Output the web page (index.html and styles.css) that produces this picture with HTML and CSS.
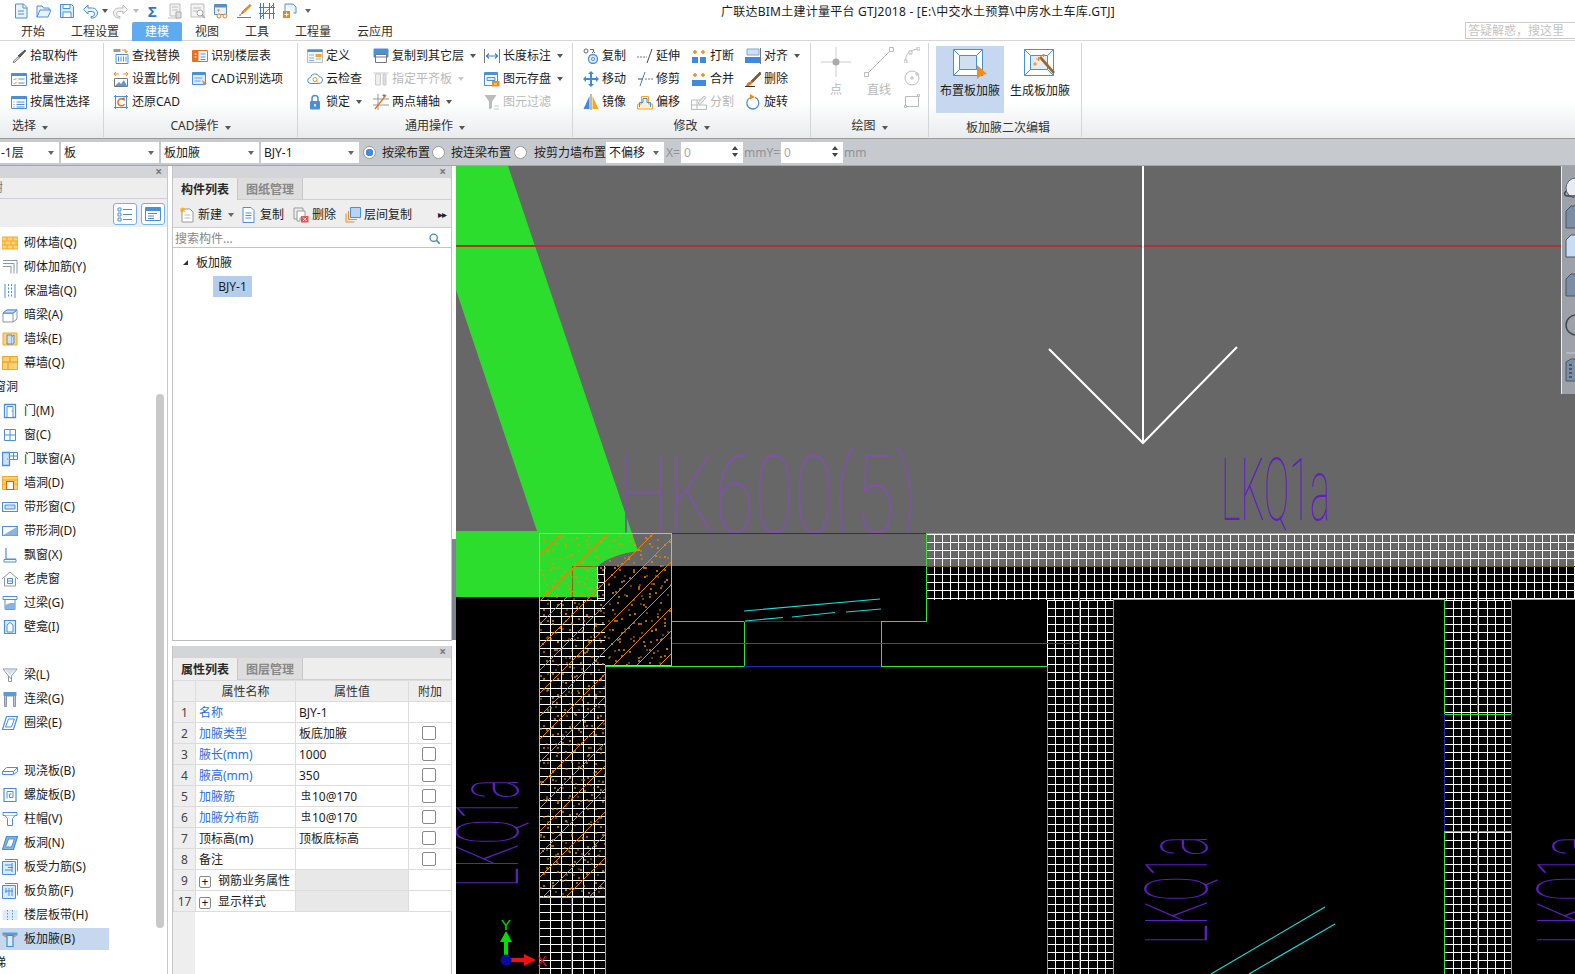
FILE: index.html
```html
<!DOCTYPE html>
<html lang="zh-CN">

<head>
  <meta charset="UTF-8">
  <title>广联达BIM土建计量平台 GTJ2018</title>
  <link rel="stylesheet" href="styles.css">
</head>

<body>
  <svg class="sheet" aria-hidden="true">
    <defs>
      <symbol id="q-new" viewBox="0 0 16 16"><path d="M2.500 1h8l3.500 3.500V15h-11.500z M10 1v4h4 M5 8h6 M5 11h6" fill="#eaf3fc" stroke="#4a90d9"/></symbol>
      <symbol id="q-open" viewBox="0 0 16 16"><path d="M1 14V3h5l1.500 2H13v2 M1 14l3-7h11l-3 7z" fill="#eaf3fc" stroke="#4a90d9"/></symbol>
      <symbol id="q-save" viewBox="0 0 16 16"><path d="M1.500 1.500h11l2 2v11h-13z" fill="#dcebfa" stroke="#4a90d9"/><path d="M4 1.500h7v4H4z M4 9h8v5.500H4z" fill="#fff" stroke="#4a90d9"/></symbol>
      <symbol id="q-undo" viewBox="0 0 16 16"><path d="M6 2L1.500 6.500 6 11V8.500h4a2.500 2.500 0 0 1 0 5h-1v1.500h1.500a4 4 0 0 0 0-10H6z" fill="#eaf3fc" stroke="#4a90d9"/></symbol>
      <symbol id="q-redo" viewBox="0 0 16 16"><path d="M10 2l4.500 4.500L10 11V8.500H6a2.500 2.500 0 0 0 0 5h1v1.500H5.500a4 4 0 0 1 0-10H10z" fill="#f4f4f4" stroke="#bbb"/></symbol>
      <symbol id="q-g1" viewBox="0 0 16 16"><path d="M3 1h10v12H3z M5 4h6 M5 7h6 M1 15h9" fill="#f2f2f2" stroke="#bdbdbd"/><path d="M9 9h5v6H9z" fill="#ddd" stroke="#aaa"/></symbol>
      <symbol id="q-g2" viewBox="0 0 16 16"><path d="M1 1h13v13H1z M3 5h8 M3 8h4" fill="#f4f4f4" stroke="#bdbdbd"/><circle cx="10" cy="10" r="3" fill="#fff" stroke="#aaa"/><path d="M12 12l3 3" stroke="#aaa" stroke-width="1.500"/></symbol>
      <symbol id="q-cal" viewBox="0 0 16 16"><path d="M1.500 1.500h12v10h-12z" fill="#eaf3fc" stroke="#5b8fc4"/><path d="M1.500 1.500h12v3h-12z" fill="#5b8fc4"/><path d="M4 7h3 M5.500 6v3" stroke="#f59a23"/><circle cx="6" cy="13" r="2" fill="#fff" stroke="#e67e22"/><circle cx="12" cy="13" r="2" fill="#fff" stroke="#e67e22"/></symbol>
      <symbol id="q-brush" viewBox="0 0 16 16"><path d="M14 1.500L7 8l-2 3 3-1.500 7-7z" fill="#f59a23" stroke="#d9731a"/><path d="M1 14.500h14" stroke="#777"/><path d="M3 12c1-1 2-1 2 0l-1 1z" fill="#666"/></symbol>
      <symbol id="q-grid" viewBox="0 0 16 16"><path d="M0 4.500h16 M0 10.500h16 M4.500 0v16 M10.500 0v16 M1.500 0v16 M14.500 0v16" stroke="#3d7fc9"/><path d="M1 15L15 1" stroke="#3d7fc9"/></symbol>
      <symbol id="q-page" viewBox="0 0 16 16"><path d="M3 1h8l3 3v6h-2.500M3 1v7" fill="#eaf3fc" stroke="#4a90d9"/><path d="M1 8h7v7H1z" fill="#f0811e"/><path d="M4.500 9.500v4 M2.500 11.500h4" stroke="#fff"/></symbol>

      <symbol id="pick" viewBox="0 0 16 16"><path d="M14 2L7 8l1.500 1.500L14.500 3z" fill="#666" stroke="#444"/><path d="M7.500 8.500L3 12.500l-1 2 2-.5 4.500-4z" fill="#ddd" stroke="#888"/></symbol>
      <symbol id="batch" viewBox="0 0 16 16"><path d="M.5 2.500h15v12H.5z" fill="#fff" stroke="#4a90d9"/><path d="M.5 2.500h15V5H.5z" fill="#4a90d9"/><path d="M2.500 8l1 1 2-2 M2.500 12l1 1 2-2" fill="none" stroke="#f08c1a"/><path d="M7.500 8h6 M7.500 12h6" stroke="#4a90d9"/></symbol>
      <symbol id="psel" viewBox="0 0 16 16"><path d="M.5 2.500h15v12H.5z" fill="#fff" stroke="#4a90d9"/><path d="M.5 2.500h15V5H.5z" fill="#4a90d9"/><path d="M2.500 8h1 M2.500 10.500h1 M2.500 13h1 M5.500 8h8 M5.500 10.500h8 M5.500 13h8" stroke="#4a90d9"/></symbol>
      <symbol id="find" viewBox="0 0 16 16"><path d="M.5 1h7v3h-7z" fill="#999"/><path d="M9 2h4v2 M11.500 3L13 5l1.500-2" fill="none" stroke="#f08c1a"/><path d="M3 6.500h12v9H3z" fill="#fff" stroke="#4a90d9"/><path d="M5.500 8.500v5 M8 8.500v5 M10.500 8.500v5 M13 8.500v5" stroke="#4a90d9"/></symbol>
      <symbol id="scale" viewBox="0 0 16 16"><path d="M1 3h5 M10 3h5 M3 1l-2 2 2 2 M13 1l2 2-2 2" fill="none" stroke="#f08c1a"/><path d="M1.500 7.500h13v8h-13z" fill="#fff" stroke="#777"/><path d="M2 15l4-4 2 2 3-4 3 6z" fill="#5b9bd5"/></symbol>
      <symbol id="restore" viewBox="0 0 16 16"><path d="M2.500 1v14 M13.500 1v14 M1 2.500h14 M1 13.500h14" stroke="#4a90d9"/><path d="M11 6a3.500 3.500 0 1 0 .5 4" fill="none" stroke="#e8701a" stroke-width="1.500"/><path d="M8 5l3.500-2 .5 4z" fill="#e8701a"/></symbol>
      <symbol id="floor" viewBox="0 0 16 16"><path d="M.5 2.500h15v11H.5z" fill="#fff" stroke="#e8701a"/><path d="M.5 2.500h6v11h-6z" fill="#e8701a"/><path d="M2.500 6h2 M2.500 9h2" stroke="#fff"/><path d="M8.500 6h5 M8.500 9h5 M8.500 11.500h5" stroke="#4a90d9"/></symbol>
      <symbol id="cadopt" viewBox="0 0 16 16"><path d="M.5 1.500h13v12H.5z" fill="#dcebfa" stroke="#4a90d9"/><path d="M.5 1.500h13V4H.5z" fill="#4a90d9"/><path d="M2.500 7h8 M2.500 10h6" stroke="#6aa3dc"/><path d="M10 9l5 3.500-2.500.5-.5 2.500z" fill="#f08c1a"/></symbol>
      <symbol id="define" viewBox="0 0 16 16"><path d="M.5 1.500h15v13H.5z" fill="#f4f4f4" stroke="#bbb"/><path d="M.5 1.500h15V4H.5z" fill="#4a90d9"/><path d="M8.500 6h6v3h-6z" fill="#f5a623"/><path d="M2 7h5 M2 10h5 M2 12.500h5 M9 11h5" stroke="#8ab4e0"/></symbol>
      <symbol id="cloud" viewBox="0 0 16 16"><path d="M4 12.500a3 3 0 0 1-.5-6A4.500 4.500 0 0 1 12 5.500a3.500 3.500 0 0 1 0 7z" fill="#fff" stroke="#4a90d9"/><circle cx="8" cy="8.500" r="2" fill="#fff" stroke="#f08c1a"/><path d="M9.500 10l1.500 1.500" stroke="#f08c1a"/></symbol>
      <symbol id="lock" viewBox="0 0 16 16"><path d="M5 7V4.500a3 3 0 0 1 6 0V7" fill="none" stroke="#4a90d9" stroke-width="1.500"/><rect x="3" y="7" width="10" height="8.500" rx="1" fill="#4a90d9"/><path d="M8 10v2.500" stroke="#fff" stroke-width="1.500"/></symbol>
      <symbol id="cfloor" viewBox="0 0 16 16"><path d="M1 1h14v8H1z" fill="#4a90d9" stroke="#4a90d9"/><path d="M2.500 6.500h11v8h-11z" fill="#fff" stroke="#777"/><path d="M2.500 9h11" stroke="#777"/></symbol>
      <symbol id="alignp" viewBox="0 0 16 16"><path d="M.5 2h15" stroke="#ccc"/><path d="M2.500 3h5v11h-5z" fill="#eee" stroke="#ccc"/><path d="M10 3h3v11h-3z" fill="#ddd" stroke="#ccc"/></symbol>
      <symbol id="twoaxis" viewBox="0 0 16 16"><path d="M0 5h16 M0 11h16 M5 0v16" stroke="#999"/><path d="M2 15L13 1" stroke="#e8701a" stroke-width="1.300"/><path d="M11 0v3 M9.500 1.500h3" stroke="#777"/></symbol>
      <symbol id="length" viewBox="0 0 16 16"><path d="M.5 1v14 M15.500 1v14" stroke="#777"/><path d="M3 8h10 M5 5.500L2.500 8 5 10.500 M11 5.500L13.500 8 11 10.500" fill="none" stroke="#3d7fc9" stroke-width="1.200"/></symbol>
      <symbol id="selem" viewBox="0 0 16 16"><path d="M.5 1.500h13v13H.5z" fill="#fff" stroke="#4a90d9"/><path d="M.5 1.500h13V4H.5z" fill="#4a90d9"/><path d="M3 6.500h8v3H3z" fill="#dcebfa" stroke="#4a90d9"/><path d="M8 10h7.500v5.500H8z" fill="#f08c1a"/><path d="M10 13h3" stroke="#fff"/></symbol>
      <symbol id="filter" viewBox="0 0 16 16"><path d="M.5 1h12L8 7.500V14L5 15.500V7.500z" fill="#bbb"/><path d="M10 12h5 M10 15h5" stroke="#ccc"/></symbol>

      <symbol id="copy" viewBox="0 0 16 16"><circle cx="3" cy="3" r="2" fill="#fff" stroke="#666"/><path d="M7 1.500h3.500V4 M9 5l1.500-1.500L12 5" fill="none" stroke="#666"/><circle cx="10" cy="11" r="4.500" fill="#dcebfa" stroke="#4a90d9" stroke-width="1.300"/><circle cx="10" cy="11" r="1.500" fill="#fff" stroke="#4a90d9"/></symbol>
      <symbol id="move" viewBox="0 0 16 16"><path d="M8 0l3 3H9v4h4V5l3 3-3 3V9H9v4h2l-3 3-3-3h2V9H3v2L0 8l3-3v2h4V3H5z" fill="#3d8ae0"/></symbol>
      <symbol id="mirror" viewBox="0 0 16 16"><path d="M6.500 2v13H.5z" fill="#3d8ae0"/><path d="M8 0v16" stroke="#777"/><path d="M9.500 2v13h6z" fill="#f5a623"/></symbol>
      <symbol id="extend" viewBox="0 0 16 16"><path d="M0 9h10" stroke="#777" stroke-dasharray="2 1"/><path d="M10 15L15 1" stroke="#4a4a4a"/></symbol>
      <symbol id="trim" viewBox="0 0 16 16"><path d="M1 8h5" stroke="#4a4a4a"/><path d="M8 8h8" stroke="#777" stroke-dasharray="2 1"/><path d="M3 15L8 1" stroke="#3d7fc9"/></symbol>
      <symbol id="offset" viewBox="0 0 16 16"><path d="M.5 15V10h4V2.500h7V10h4v5z" fill="#fdf0d0" stroke="#f5a623"/><path d="M2.500 13V8.500h3.500V4.500h4v4h3.500V13" fill="none" stroke="#4a90d9"/></symbol>
      <symbol id="break" viewBox="0 0 16 16"><path d="M1 9h6v6H1z M9 9h6v6H9z" fill="#3d8ae0"/><path d="M2 4h4 M4 2v4 M10 4h4 M12 2v4" stroke="#f08c1a" stroke-width="1.500"/></symbol>
      <symbol id="merge" viewBox="0 0 16 16"><path d="M1 9h14v6H1z" fill="#3d8ae0"/><path d="M2 4h4 M4 2v4 M10 4h4 M12 2v4" stroke="#f08c1a" stroke-width="1.500"/></symbol>
      <symbol id="split" viewBox="0 0 16 16"><path d="M.5 15.500V6h11 M.5 11h15v4.500H.5 M6 6v9.500" fill="none" stroke="#bbb"/><path d="M7 9l6-7 2 1.500-6 7z" fill="#eee" stroke="#bbb"/></symbol>
      <symbol id="align" viewBox="0 0 16 16"><path d="M2 1h12v6H2z" fill="#cfe0f3" stroke="#7aa7d6"/><path d="M0 9h15v6H0z" fill="#3d8ae0"/><path d="M15.500 0v16" stroke="#777"/></symbol>
      <symbol id="delete" viewBox="0 0 16 16"><path d="M15 1L6 10l1.500 1.500L16 3z" fill="#8a5a2b" stroke="#5a3a1a" stroke-width=".6"/><path d="M6 10l-3.500 2-1.500 3h3l4-3.500z" fill="#e8701a"/><path d="M0 15.500h10" stroke="#333"/></symbol>
      <symbol id="rotate" viewBox="0 0 16 16"><path d="M10 3.400a6 6 0 1 1-5 .3" fill="none" stroke="#4a90d9" stroke-width="1.300"/><path d="M5 0l5 3-5 2.500z" fill="#f08c1a"/></symbol>

      <symbol id="d-point" viewBox="0 0 30 30"><path d="M0 15h30 M15 0v30" stroke="#ccc"/><circle cx="15" cy="15" r="3.500" fill="#aaa"/></symbol>
      <symbol id="d-line" viewBox="0 0 30 30"><path d="M2.500 27.500l25-25" stroke="#bbb"/><path d="M.5 25.500h4v4h-4z M25.500.5h4v4h-4z" fill="#fff" stroke="#bbb"/></symbol>
      <symbol id="d-arc" viewBox="0 0 16 16"><path d="M1.500 14c0-7 4-11 13-12" fill="none" stroke="#bbb"/><path d="M0 13h3v3H0z M5 4h3v3H5z M13 0h3v3h-3z" fill="#fff" stroke="#bbb"/></symbol>
      <symbol id="d-circle" viewBox="0 0 16 16"><circle cx="8" cy="8" r="7" fill="none" stroke="#bbb"/><path d="M7 7h2v2H7z M12 3h2v2h-2z" fill="#fff" stroke="#bbb"/></symbol>
      <symbol id="d-rect" viewBox="0 0 16 16"><path d="M1.500 3.500h13v10h-13z" fill="none" stroke="#bbb"/><path d="M.5 12.500h2v2h-2z M13.500 1.500h2v2h-2z" fill="#fff" stroke="#bbb"/></symbol>
      <symbol id="haunch1" viewBox="0 0 34 30"><path d="M.5.500h29v26H.5z" fill="#fff" stroke="#4a90d9"/><path d="M6.500 6.500h17v14h-17z" fill="#cfe0f3" stroke="#4a90d9"/><path d="M.5.500l6 6 M29.500.500l-6 6 M.5 26.500l6-6 M29.500 26.500l-6-6" stroke="#4a90d9"/><path d="M24 16l10 9-5 1-5 4z" fill="#f08c1a"/></symbol>
      <symbol id="haunch2" viewBox="0 0 32 30"><path d="M.5.500h29v26H.5z" fill="#fff" stroke="#4a90d9"/><path d="M6.500 6.500h17v14h-17z" fill="#e3edf8" stroke="#4a90d9"/><path d="M.5.500l6 6 M29.500.500l-6 6 M.5 26.500l6-6 M29.500 26.500l-6-6" stroke="#4a90d9"/><path d="M15 9l14 16 2-2L17 7z" fill="#a0652b"/><path d="M12 10h5 M14.500 8v4 M9 15h4 M11 13v4 M18 6h3 M19.500 5v3" stroke="#f08c1a"/></symbol>

      <symbol id="l-list" viewBox="0 0 16 16"><path d="M1 2h3v3H1z M1 7h3v3H1z M1 12h3v3H1z" fill="none" stroke="#4a90d9"/><path d="M6 3.500h9 M6 8.500h9 M6 13.500h9" stroke="#4a90d9"/></symbol>
      <symbol id="l-det" viewBox="0 0 16 16"><path d="M.5 1.500h15v13H.5z" fill="#fff" stroke="#4a90d9"/><path d="M.5 1.500h15V5H.5z" fill="#4a90d9"/><path d="M3 7.500h9 M3 10h6 M3 12.500h6" stroke="#4a90d9"/></symbol>
      <symbol id="brick" viewBox="0 0 16 16"><path d="M0 2h16v12H0z" fill="#fdd27a" stroke="#f5a623"/><path d="M0 6h16 M0 10h16 M5 2v4 M11 2v4 M3 6v4 M9 6v4 M14 6v4 M5 10v4 M11 10v4" stroke="#f5a623"/></symbol>
      <symbol id="wallbar" viewBox="0 0 16 16"><path d="M1 1.500h14v13 M1 4.500h11v10 M1 7.500h8v7" fill="none" stroke="#8a97a8"/></symbol>
      <symbol id="insul" viewBox="0 0 16 16"><path d="M3 1v14 M13 1v14" stroke="#4a90d9"/><path d="M6.500 1v14 M9.500 1v14" stroke="#4a90d9" stroke-dasharray="2 1.500"/></symbol>
      <symbol id="dark" viewBox="0 0 16 16"><path d="M1 6l4-3h10l-4 3z M1 6h10v9H1z M11 6l4-3v9l-4 3" fill="#fff" stroke="#8a97a8"/><path d="M5 3h10l-4 3H1z" fill="#cfe0f3" stroke="#4a90d9"/></symbol>
      <symbol id="pier" viewBox="0 0 16 16"><path d="M1 2h14v12H1z" fill="#fdd27a" stroke="#f5a623"/><path d="M5 4h5v9H5z" fill="#cfe0f3" stroke="#4a90d9"/><path d="M10 5.500l2-1.500v8l-2 1.500" fill="#cfe0f3" stroke="#4a90d9"/></symbol>
      <symbol id="curtain" viewBox="0 0 16 16"><path d="M.5 1.500h15v13H.5z" fill="#fdd27a" stroke="#f5a623"/><path d="M.5 7h15 M8 1.500V7 M6 7v7.500" stroke="#f5a623" stroke-width="1.300"/></symbol>
      <symbol id="door" viewBox="0 0 16 16"><path d="M2.500 1.500h11v13h-11z" fill="#fff" stroke="#4a90d9" stroke-width="1.300"/><path d="M5 3.500h6v11H5z" fill="#fff" stroke="#4a90d9"/><path d="M9.500 8h1" stroke="#4a90d9"/></symbol>
      <symbol id="window" viewBox="0 0 16 16"><path d="M2.500 2.500h11v11h-11z M8 2.500v11 M2.500 8h11" fill="#fff" stroke="#4a90d9"/></symbol>
      <symbol id="dw" viewBox="0 0 16 16"><path d="M.5 1.500h7v13h-7z" fill="#cfe0f3" stroke="#4a90d9" stroke-width="1.300"/><path d="M7.500 1.500h8v7h-8z M11.500 1.500v7 M7.500 5h8" fill="#fff" stroke="#4a90d9"/><path d="M5 8h1" stroke="#4a90d9"/></symbol>
      <symbol id="hole" viewBox="0 0 16 16"><path d="M.5 1.500h15v13H.5z" fill="#fdd27a" stroke="#f5a623"/><path d="M.5 5h15 M.5 9h4 M11.500 9h4" stroke="#f5a623"/><path d="M4.500 6.500h7v8h-7z" fill="#fff" stroke="#d9601a" stroke-width="1.200"/></symbol>
      <symbol id="strip" viewBox="0 0 16 16"><path d="M.5 3.500h15v9H.5z" fill="#fff" stroke="#4a90d9" stroke-width="1.200"/><path d="M3 6h10v4H3z" fill="#cfe0f3" stroke="#4a90d9"/></symbol>
      <symbol id="striph" viewBox="0 0 16 16"><path d="M.5 3.500h15v9H.5z" fill="#fff" stroke="#4a90d9" stroke-width="1.200"/><path d="M.5 12.500l15-9v9z" fill="#8ab4e0"/></symbol>
      <symbol id="bay" viewBox="0 0 16 16"><path d="M4 1v11h10" fill="none" stroke="#4a90d9" stroke-width="1.200"/><path d="M2 12.500h12v2.500H2z" fill="#fff" stroke="#4a90d9"/></symbol>
      <symbol id="dormer" viewBox="0 0 16 16"><path d="M0 8l8-7 8 7M2.500 7v8h11V7" fill="#fff" stroke="#8a97a8"/><path d="M5.500 7.500h5v5h-5z M5.500 10h5" fill="#fff" stroke="#4a90d9"/></symbol>
      <symbol id="lintel" viewBox="0 0 16 16"><path d="M1 1.500h14v3H1z" fill="#fff" stroke="#4a90d9"/><path d="M3 4.500h10v10H3z" fill="#fff" stroke="#4a90d9"/><path d="M3 14.500V10l5-2h5v6.500z" fill="#8ab4e0"/></symbol>
      <symbol id="niche" viewBox="0 0 16 16"><path d="M2.500 1.500h11v13h-11z" fill="#dcebfa" stroke="#4a90d9" stroke-width="1.200"/><path d="M5 13V6l3-2.500L11 6v7z" fill="#fff" stroke="#4a90d9"/></symbol>
      <symbol id="beam" viewBox="0 0 16 16"><path d="M1 2h14L9.500 9v5.500h-3V9z" fill="#fff" stroke="#8a97a8"/><path d="M3 3h10L8 8z" fill="#cfe0f3"/><path d="M6.500 9l3 3" stroke="#8a97a8"/></symbol>
      <symbol id="coupl" viewBox="0 0 16 16"><path d="M2.500 3v12.500h2V5h7v10.500h2V3" fill="#bcc3cc" stroke="#8a97a8"/><path d="M1.500 1h13v4h-13z" fill="#5b9bd5"/></symbol>
      <symbol id="ring" viewBox="0 0 16 16"><path d="M4.500 1.500H15.500L11.500 14.500H.5z" fill="#fff" stroke="#4a90d9" stroke-width="1.200"/><path d="M6.500 4h6L9.500 12h-6z" fill="#fff" stroke="#4a90d9"/></symbol>
      <symbol id="slab" viewBox="0 0 16 16"><path d="M.5 8.500l4-4h11v4l-4 3H.5z M.5 8.500h11l4-4 M11.500 8.500v3" fill="#fff" stroke="#4a90d9"/></symbol>
      <symbol id="spiral" viewBox="0 0 16 16"><path d="M2 1.500h12v13H2z" fill="#fff" stroke="#4a90d9" stroke-width="1.200"/><path d="M5 11.500v-7h6v6H7.500V7h2" fill="none" stroke="#4a90d9"/></symbol>
      <symbol id="cap" viewBox="0 0 16 16"><path d="M1 1.500h14v3H1z" fill="#fff" stroke="#4a90d9"/><path d="M3 4.500l2.500 3v7h5v-7l2.500-3" fill="#fff" stroke="#4a90d9"/></symbol>
      <symbol id="shole" viewBox="0 0 16 16"><path d="M4.500 1.500H15.500L11.500 14.500H.5z" fill="#8ab4e0" stroke="#4a90d9" stroke-width="1.200"/><path d="M6.500 4h6L9.500 12h-6z" fill="#fff" stroke="#4a90d9"/></symbol>
      <symbol id="sbar" viewBox="0 0 16 16"><path d="M3 .5h12.500v12" fill="none" stroke="#4a90d9"/><path d="M.5 2.500h13v13H.5z" fill="#dcebfa" stroke="#4a90d9"/><path d="M3 6h7 M3 11h7 M10 4v9 M6 8.500h5" stroke="#4a90d9"/></symbol>
      <symbol id="nbar" viewBox="0 0 16 16"><path d="M3 .5h12.500v12" fill="none" stroke="#4a90d9"/><path d="M.5 2.500h13v13H.5z" fill="#dcebfa" stroke="#4a90d9"/><path d="M7 5v8 M10 5v8 M3 8h8 M4 5v5" stroke="#4a90d9"/></symbol>
      <symbol id="band" viewBox="0 0 16 16"><path d="M.5 3h15v10H.5z" fill="#dcebfa"/><path d="M5.500 3v10 M10.500 3v10" stroke="#6a90bd" stroke-dasharray="1.500 1.500"/></symbol>
      <symbol id="haunch" viewBox="0 0 16 16"><path d="M.5 1.500h15v3H.5z" fill="#5b9bd5"/><path d="M.5 4.500H5l1 3z M15.500 4.500H11l-1 3z" fill="#d98a4a"/><path d="M5 4.500h6v11H5z" fill="#dcebfa" stroke="#3d8ae0" stroke-width="1.200"/></symbol>

      <symbol id="m-new" viewBox="0 0 16 16"><path d="M3 2h8l3 3v10H3z" fill="#fff" stroke="#999"/><path d="M5.500 8h6 M5.500 11h6" stroke="#bbb"/><path d="M1 3h5 M3.500 .5v5 M1.500 1l4 4 M5.500 1l-4 4" stroke="#f5a623"/></symbol>
      <symbol id="m-copy" viewBox="0 0 16 16"><path d="M2 .5h8l3 3v12H2z" fill="#fff" stroke="#4a90d9"/><path d="M4.500 6h6 M4.500 8.500h6 M4.500 11h6" stroke="#4a90d9"/></symbol>
      <symbol id="m-del" viewBox="0 0 16 16"><path d="M1 1h9v3 M1 1v11h3" fill="none" stroke="#999"/><path d="M4 4h8v7H7v3H4z" fill="#fff" stroke="#999"/><path d="M8 9h7.500v6.500H8z" fill="#e05555"/><path d="M10 10.500l3.500 3.500 M13.500 10.500L10 14" stroke="#fff"/></symbol>
      <symbol id="m-floor" viewBox="0 0 16 16"><path d="M5.500 .5h10v10h-10z" fill="#b8d4f2" stroke="#4a90d9"/><path d="M3.500 4v8.500H12 M1 6.500v8.500h8.500" fill="none" stroke="#f08c1a"/></symbol>
      <symbol id="m-find" viewBox="0 0 16 16"><circle cx="7" cy="7" r="4.500" fill="#fff" stroke="#3d8ab8" stroke-width="1.600"/><path d="M10.500 10.500l4 4" stroke="#3d8ab8" stroke-width="2"/></symbol>

      <pattern id="hatch" width="69" height="69" patternUnits="userSpaceOnUse" x="539" y="533">
        <path d="M0 23L23 0 M0 46L46 0 M0 69L69 0 M23 69L69 23 M46 69L69 46" stroke="#f08000" stroke-width="1"/>
        <g fill="#f58a00">
          <circle cx="5" cy="8" r="1"/><circle cx="14" cy="31" r=".9"/><circle cx="27" cy="12" r="1.100"/><circle cx="38" cy="5" r=".9"/><circle cx="50" cy="15" r="1"/>
          <circle cx="62" cy="9" r=".9"/><circle cx="9" cy="19" r=".9"/><circle cx="21" cy="26" r="1"/><circle cx="33" cy="22" r=".9"/><circle cx="44" cy="29" r="1.100"/>
          <circle cx="57" cy="24" r=".9"/><circle cx="66" cy="35" r="1"/><circle cx="4" cy="42" r="1.100"/><circle cx="16" cy="48" r=".9"/><circle cx="26" cy="39" r=".9"/>
          <circle cx="37" cy="44" r="1"/><circle cx="49" cy="38" r=".9"/><circle cx="59" cy="47" r="1.100"/><circle cx="8" cy="59" r=".9"/><circle cx="19" cy="63" r="1"/>
          <circle cx="31" cy="56" r=".9"/><circle cx="42" cy="61" r="1"/><circle cx="53" cy="55" r=".9"/><circle cx="64" cy="62" r=".9"/><circle cx="24" cy="3" r=".9"/>
          <circle cx="46" cy="51" r=".9"/><circle cx="12" cy="37" r=".9"/><circle cx="55" cy="33" r=".8"/><circle cx="35" cy="66" r=".8"/><circle cx="2" cy="28" r=".8"/>
        </g>
      </pattern>
      <pattern id="dots-a" width="43" height="37" patternUnits="userSpaceOnUse" x="541" y="536">
        <g fill="#f58a00">
          <circle cx="3" cy="5" r=".9"/><circle cx="12" cy="14" r="1"/><circle cx="20" cy="3" r=".8"/><circle cx="29" cy="20" r="1"/><circle cx="38" cy="9" r=".9"/>
          <circle cx="7" cy="27" r=".8"/><circle cx="17" cy="32" r="1"/><circle cx="25" cy="11" r=".8"/><circle cx="34" cy="30" r=".9"/><circle cx="41" cy="22" r=".8"/>
          <circle cx="15" cy="23" r=".8"/><circle cx="31" cy="4" r=".8"/>
        </g>
      </pattern>
      <pattern id="dots-b" width="31" height="53" patternUnits="userSpaceOnUse" x="544" y="540">
        <g fill="#f58a00">
          <circle cx="4" cy="11" r=".8"/><circle cx="13" cy="4" r=".9"/><circle cx="23" cy="17" r=".8"/><circle cx="9" cy="28" r="1"/><circle cx="19" cy="36" r=".8"/>
          <circle cx="28" cy="30" r=".9"/><circle cx="3" cy="45" r=".8"/><circle cx="14" cy="49" r=".9"/><circle cx="25" cy="46" r=".8"/>
        </g>
      </pattern>
      <clipPath id="clip-hk"><rect x="456" y="166" width="1119" height="367"/></clipPath>
    </defs>
  </svg>

  <header class="titlebar">
    <div class="qat">
      <svg class="ic"><use href="#q-new"/></svg>
      <svg class="ic"><use href="#q-open"/></svg>
      <svg class="ic"><use href="#q-save"/></svg>
      <svg class="ic"><use href="#q-undo"/></svg>
      <i class="caret qcaret"></i>
      <svg class="ic"><use href="#q-redo"/></svg>
      <i class="caret qcaret light"></i>
      <span class="sigma">Σ</span>
      <svg class="ic"><use href="#q-g1"/></svg>
      <svg class="ic"><use href="#q-g2"/></svg>
      <svg class="ic"><use href="#q-cal"/></svg>
      <svg class="ic"><use href="#q-brush"/></svg>
      <svg class="ic"><use href="#q-grid"/></svg>
      <svg class="ic"><use href="#q-page"/></svg>
      <i class="caret qmore"></i>
    </div>
    <div class="apptitle">广联达BIM土建计量平台 GTJ2018 - [E:\中交水土预算\中房水土车库.GTJ]</div>
  </header>

  <nav class="tabs">
    <span class="tab">开始</span>
    <span class="tab">工程设置</span>
    <span class="tab active">建模</span>
    <span class="tab">视图</span>
    <span class="tab">工具</span>
    <span class="tab">工程量</span>
    <span class="tab">云应用</span>
    <div class="askbox">答疑解惑，搜这里</div>
  </nav>

  <section class="ribbon">
    <div class="group g-select">
      <div class="group-body">
        <div class="rcol">
          <div class="ritem"><svg class="ic"><use href="#pick"/></svg>拾取构件</div>
          <div class="ritem"><svg class="ic"><use href="#batch"/></svg>批量选择</div>
          <div class="ritem"><svg class="ic"><use href="#psel"/></svg>按属性选择</div>
        </div>
      </div>
      <div class="group-label left">选择<i class="caret"></i></div>
    </div>

    <div class="group g-cad">
      <div class="group-body">
        <div class="rcol w79">
          <div class="ritem"><svg class="ic"><use href="#find"/></svg>查找替换</div>
          <div class="ritem"><svg class="ic"><use href="#scale"/></svg>设置比例</div>
          <div class="ritem"><svg class="ic"><use href="#restore"/></svg>还原CAD</div>
        </div>
        <div class="rcol">
          <div class="ritem"><svg class="ic"><use href="#floor"/></svg>识别楼层表</div>
          <div class="ritem"><svg class="ic"><use href="#cadopt"/></svg>CAD识别选项</div>
        </div>
      </div>
      <div class="group-label">CAD操作<i class="caret"></i></div>
    </div>

    <div class="group g-common">
      <div class="group-body">
        <div class="rcol w66">
          <div class="ritem"><svg class="ic"><use href="#define"/></svg>定义</div>
          <div class="ritem"><svg class="ic"><use href="#cloud"/></svg>云检查</div>
          <div class="ritem"><svg class="ic"><use href="#lock"/></svg>锁定<i class="caret"></i></div>
        </div>
        <div class="rcol w111">
          <div class="ritem"><svg class="ic"><use href="#cfloor"/></svg>复制到其它层<i class="caret"></i></div>
          <div class="ritem off"><svg class="ic"><use href="#alignp"/></svg>指定平齐板<i class="caret"></i></div>
          <div class="ritem"><svg class="ic"><use href="#twoaxis"/></svg>两点辅轴<i class="caret"></i></div>
        </div>
        <div class="rcol">
          <div class="ritem"><svg class="ic"><use href="#length"/></svg>长度标注<i class="caret"></i></div>
          <div class="ritem"><svg class="ic"><use href="#selem"/></svg>图元存盘<i class="caret"></i></div>
          <div class="ritem off"><svg class="ic"><use href="#filter"/></svg>图元过滤</div>
        </div>
      </div>
      <div class="group-label">通用操作<i class="caret"></i></div>
    </div>

    <div class="group g-modify">
      <div class="group-body">
        <div class="rcol w54">
          <div class="ritem"><svg class="ic"><use href="#copy"/></svg>复制</div>
          <div class="ritem"><svg class="ic"><use href="#move"/></svg>移动</div>
          <div class="ritem"><svg class="ic"><use href="#mirror"/></svg>镜像</div>
        </div>
        <div class="rcol w54">
          <div class="ritem"><svg class="ic"><use href="#extend"/></svg>延伸</div>
          <div class="ritem"><svg class="ic"><use href="#trim"/></svg>修剪</div>
          <div class="ritem"><svg class="ic"><use href="#offset"/></svg>偏移</div>
        </div>
        <div class="rcol w54">
          <div class="ritem"><svg class="ic"><use href="#break"/></svg>打断</div>
          <div class="ritem"><svg class="ic"><use href="#merge"/></svg>合并</div>
          <div class="ritem off"><svg class="ic"><use href="#split"/></svg>分割</div>
        </div>
        <div class="rcol">
          <div class="ritem"><svg class="ic"><use href="#align"/></svg>对齐<i class="caret"></i></div>
          <div class="ritem"><svg class="ic"><use href="#delete"/></svg>删除</div>
          <div class="ritem"><svg class="ic"><use href="#rotate"/></svg>旋转</div>
        </div>
      </div>
      <div class="group-label">修改<i class="caret"></i></div>
    </div>

    <div class="group g-draw">
      <div class="group-body">
        <div class="drawbtn"><svg class="ic30"><use href="#d-point"/></svg><span>点</span></div>
        <div class="drawbtn"><svg class="ic30"><use href="#d-line"/></svg><span>直线</span></div>
        <div class="drawsmall">
          <svg class="ic"><use href="#d-arc"/></svg>
          <svg class="ic"><use href="#d-circle"/></svg>
          <svg class="ic"><use href="#d-rect"/></svg>
        </div>
      </div>
      <div class="group-label">绘图<i class="caret"></i></div>
    </div>

    <div class="group g-haunch">
      <div class="group-body">
        <div class="bigbtn on"><svg class="ic34"><use href="#haunch1"/></svg><span>布置板加腋</span></div>
        <div class="bigbtn second"><svg class="ic34"><use href="#haunch2"/></svg><span>生成板加腋</span></div>
      </div>
      <div class="group-label">板加腋二次编辑</div>
    </div>
  </section>

  <section class="optbar">
    <div class="sel first">-1层<i class="caret"></i></div>
    <div class="sel">板<i class="caret"></i></div>
    <div class="sel">板加腋<i class="caret"></i></div>
    <div class="sel">BJY-1<i class="caret"></i></div>
    <i class="radio checked"></i><span class="optlabel">按梁布置</span>
    <i class="radio"></i><span class="optlabel">按连梁布置</span>
    <i class="radio last"></i><span class="optlabel wide">按剪力墙布置</span>
    <div class="sel small">不偏移<i class="caret"></i></div>
    <span class="optgray x">X=</span>
    <div class="spin">0<span class="arrows"><i></i><i></i></span></div>
    <span class="optgray">mmY=</span>
    <div class="spin">0<span class="arrows"><i></i><i></i></span></div>
    <span class="optgray">mm</span>
  </section>

  <main class="work">
    <aside class="nav">
      <div class="panelhead"><span class="close">×</span></div>
      <div class="navtitle"><span>导航树</span></div>
      <div class="navtools">
        <span class="toolbtn"><svg class="ic"><use href="#l-list"/></svg></span>
        <span class="toolbtn"><svg class="ic"><use href="#l-det"/></svg></span>
      </div>
      <div class="navlist">
        <div class="navrow"><svg class="ic"><use href="#brick"/></svg>砌体墙(Q)</div>
        <div class="navrow"><svg class="ic"><use href="#wallbar"/></svg>砌体加筋(Y)</div>
        <div class="navrow"><svg class="ic"><use href="#insul"/></svg>保温墙(Q)</div>
        <div class="navrow"><svg class="ic"><use href="#dark"/></svg>暗梁(A)</div>
        <div class="navrow"><svg class="ic"><use href="#pier"/></svg>墙垛(E)</div>
        <div class="navrow"><svg class="ic"><use href="#curtain"/></svg>幕墙(Q)</div>
        <div class="navgroup wide">门窗洞</div>
        <div class="navrow"><svg class="ic"><use href="#door"/></svg>门(M)</div>
        <div class="navrow"><svg class="ic"><use href="#window"/></svg>窗(C)</div>
        <div class="navrow"><svg class="ic"><use href="#dw"/></svg>门联窗(A)</div>
        <div class="navrow"><svg class="ic"><use href="#hole"/></svg>墙洞(D)</div>
        <div class="navrow"><svg class="ic"><use href="#strip"/></svg>带形窗(C)</div>
        <div class="navrow"><svg class="ic"><use href="#striph"/></svg>带形洞(D)</div>
        <div class="navrow"><svg class="ic"><use href="#bay"/></svg>飘窗(X)</div>
        <div class="navrow"><svg class="ic"><use href="#dormer"/></svg>老虎窗</div>
        <div class="navrow"><svg class="ic"><use href="#lintel"/></svg>过梁(G)</div>
        <div class="navrow"><svg class="ic"><use href="#niche"/></svg>壁龛(I)</div>
        <div class="navgroup"></div>
        <div class="navrow"><svg class="ic"><use href="#beam"/></svg>梁(L)</div>
        <div class="navrow"><svg class="ic"><use href="#coupl"/></svg>连梁(G)</div>
        <div class="navrow"><svg class="ic"><use href="#ring"/></svg>圈梁(E)</div>
        <div class="navgroup"></div>
        <div class="navrow"><svg class="ic"><use href="#slab"/></svg>现浇板(B)</div>
        <div class="navrow"><svg class="ic"><use href="#spiral"/></svg>螺旋板(B)</div>
        <div class="navrow"><svg class="ic"><use href="#cap"/></svg>柱帽(V)</div>
        <div class="navrow"><svg class="ic"><use href="#shole"/></svg>板洞(N)</div>
        <div class="navrow"><svg class="ic"><use href="#sbar"/></svg>板受力筋(S)</div>
        <div class="navrow"><svg class="ic"><use href="#nbar"/></svg>板负筋(F)</div>
        <div class="navrow"><svg class="ic"><use href="#band"/></svg>楼层板带(H)</div>
        <div class="navrow picked"><svg class="ic"><use href="#haunch"/></svg>板加腋(B)</div>
        <div class="navgroup stair">楼梯</div>
      </div>
      <div class="navscroll"></div>
    </aside>

    <div class="midcol">
      <section class="panel list-panel">
        <div class="panelhead"><span class="close">×</span></div>
        <div class="ptabs"><span class="ptab active">构件列表</span><span class="ptab">图纸管理</span></div>
        <div class="ptools">
          <span class="ptool t-new"><svg class="ic"><use href="#m-new"/></svg>新建<i class="caret"></i></span>
          <span class="ptool t-copy"><svg class="ic"><use href="#m-copy"/></svg>复制</span>
          <span class="ptool t-del"><svg class="ic"><use href="#m-del"/></svg>删除</span>
          <span class="ptool t-floor"><svg class="ic"><use href="#m-floor"/></svg>层间复制</span>
          <span class="more">▸▸</span>
        </div>
        <div class="psearch">搜索构件...<svg class="ic13"><use href="#m-find"/></svg></div>
        <div class="tree">
          <div class="tree-root"><i class="tri"></i>板加腋</div>
          <div class="tree-leaf"><span>BJY-1</span></div>
        </div>
      </section>

      <section class="panel prop-panel">
        <div class="panelhead"><span class="close">×</span></div>
        <div class="ptabs"><span class="ptab active">属性列表</span><span class="ptab">图层管理</span></div>
        <div class="propwrap">
          <table class="props">
            <colgroup><col class="c-no"><col class="c-name"><col class="c-val"><col class="c-add"></colgroup>
            <tr class="head"><th></th><th>属性名称</th><th>属性值</th><th>附加</th></tr>
            <tr><td class="no">1</td><td class="link">名称</td><td>BJY-1</td><td></td></tr>
            <tr><td class="no">2</td><td class="link">加腋类型</td><td>板底加腋</td><td class="chk"><i></i></td></tr>
            <tr><td class="no">3</td><td class="link">腋长(mm)</td><td>1000</td><td class="chk"><i></i></td></tr>
            <tr><td class="no">4</td><td class="link">腋高(mm)</td><td>350</td><td class="chk"><i></i></td></tr>
            <tr><td class="no">5</td><td class="link">加腋筋</td><td><span class="bar">虫</span>10@170</td><td class="chk"><i></i></td></tr>
            <tr><td class="no">6</td><td class="link">加腋分布筋</td><td><span class="bar">虫</span>10@170</td><td class="chk"><i></i></td></tr>
            <tr><td class="no">7</td><td>顶标高(m)</td><td>顶板底标高</td><td class="chk"><i></i></td></tr>
            <tr><td class="no">8</td><td>备注</td><td></td><td class="chk"><i></i></td></tr>
            <tr><td class="no">9</td><td class="plus"><i>+</i>钢筋业务属性</td><td class="shade"></td><td></td></tr>
            <tr><td class="no">17</td><td class="plus"><i>+</i>显示样式</td><td class="shade"></td><td></td></tr>
          </table>
        </div>
      </section>
    </div>

    <div class="splitter"><i></i></div>

    <div class="canvas">
      <svg class="drawing" viewBox="456 166 1119 808" width="1119" height="808">
        <rect x="456" y="166" width="1119" height="808" fill="#000"/>
        <rect x="456" y="166" width="1119" height="400" fill="#676767"/>

        <path d="M456 166H508L638 551C622 553 608 558 597 566V597H456V531H537L456 290z" fill="#2ddd2d"/>

        <text class="cad hk" x="618" y="533" textLength="299" lengthAdjust="spacingAndGlyphs" clip-path="url(#clip-hk)">HK600(5)</text>
        <text class="cad" x="1221" y="520" textLength="109" lengthAdjust="spacingAndGlyphs">LKQ1a</text>
        <text class="cad" transform="translate(518 887) rotate(-90)" textLength="108" lengthAdjust="spacingAndGlyphs">LKQ1a</text>
        <text class="cad" transform="translate(1207 944) rotate(-90)" textLength="108" lengthAdjust="spacingAndGlyphs">LKQ1a</text>
        <text class="cad" transform="translate(1599 944) rotate(-90)" textLength="108" lengthAdjust="spacingAndGlyphs">LKQ1a</text>

        <!-- wide stroked lines with a dash make the rebar meshes -->
        <g class="crisp mesh" fill="none" stroke="#fff">
          <path d="M926 567H1575" stroke-width="66" stroke-dasharray="1 7"/>
          <path d="M1250.500 534V600" stroke-width="649" stroke-dasharray="1 7"/>
          <path d="M1047 787H1113" stroke-width="374" stroke-dasharray="1 7.250"/>
          <path d="M1080 600V974" stroke-width="66" stroke-dasharray="1 7"/>
          <path d="M1444 787H1512" stroke-width="374" stroke-dasharray="1 7.500"/>
          <path d="M1478 600V974" stroke-width="68" stroke-dasharray="1 7"/>
          <path d="M539 787H605" stroke-width="374" stroke-dasharray="1 10"/>
          <path d="M572 600V974" stroke-width="66" stroke-dasharray="1 7"/>
          <path d="M597.500 566V600 M604.500 566V600 M597 574.500H605 M597 582.500H605 M597 590.500H605 M597 598.500H605"/>
        </g>

        <g class="crisp" fill="none">
          <path d="M926 533.500H1575 M926.500 533V621.500H672 M672 621.500H744.500V666.500H605.500 M744.500 621.500V666.500 M881.500 621.500V666.500 M881 621.500H926 M881 666.500H1047.500V974 M1113.500 600V974 M1113 599.500H1444.500V974 M1511.500 599.500H1575 M1511.500 600V714 M1444.500 714H1511.500 M1444.500 831.500H1511.500 M1511.500 831V974" stroke="#30e830"/>
          <path d="M672 533.500H926 M744 621.500H881 M744 666.500H881 M1444.500 714V831 M1511.500 714V831" stroke="#2222cc"/>
          <path d="M539.500 898V974 M605.500 898V974" stroke="#30e830"/>
          <path d="M672 643.500H1079.500 M926 566.500H1575 M1079.500 566V974 M1477.500 566V714 M1477.500 831V974 M571.500 898V974" stroke="#6a5010"/>
          <path d="M572 597V566.500H597" stroke="#8a6a10"/>
        </g>

        <path d="M539 533H672V666H605V898H539z" fill="url(#hatch)"/>
        <path d="M539 533H672V666H605V898H539z" fill="url(#dots-a)"/>
        <path d="M539 533H672V666H605V898H539z" fill="url(#dots-b)"/>
        <path class="crisp" d="M539.500 533.500H671.500V665.500H605.500V897.500H539.500z" fill="none" stroke="#d8c414"/>

        <g stroke="#18d8d8" stroke-width="1.200">
          <path d="M744 611L880 599 M745 621L783 617.500 M792 617L835 612.500 M846 612L881 609 M1211 974L1325 907 M1249 974L1335 924"/>
        </g>

        <path d="M456 246H1561" stroke="#bc2c2c" stroke-width="2"/>
        <path d="M1143 166V443 M1049 349L1143 443 1237 347" stroke="#fff" stroke-width="2" fill="none"/>

        <path d="M504 955V942H500L506 931 512 942H508V955z" fill="#00e000"/>
        <path d="M510 958H524V954L536 960 524 966V962H510z" fill="#f01010"/>
        <circle cx="506" cy="960" r="5.500" fill="#0a0aa0"/>
        <text class="axis y" x="506" y="930">Y</text>
        <text class="axis x" x="542" y="966">X</text>
      </svg>
      <div class="viewbar">
        <svg width="14" height="228" viewBox="0 0 14 228">
          <circle cx="14" cy="22" r="10" fill="#e8ecf2" stroke="#5a6470"/>
          <path d="M4 25c-2 2-2 5 1 5h9" fill="none" stroke="#3c4450" stroke-width="1.500"/>
          <path d="M4 45l5-5h5v22H4z" fill="#7d8ea4" stroke="#4a5562"/>
          <path d="M4 74l5-5h5v22H4z" fill="#c8dcf4" stroke="#4a5562"/>
          <path d="M4 113l5-5h5v22H4z" fill="#7d8ea4" stroke="#4a5562"/>
          <circle cx="14" cy="159" r="10" fill="none" stroke="#404852" stroke-width="1.500"/>
          <path d="M4 187h10" stroke="#c8ccd2"/>
          <path d="M4 196l5-3h5v22H4z" fill="#7d8ea4" stroke="#4a5562"/>
          <path d="M7 199h3 M7 203h3 M7 207h3 M7 211h3" stroke="#222"/>
        </svg>
      </div>
    </div>
  </main>
</body>

</html>
```

FILE: styles.css
```css
* {
  box-sizing: border-box;
}

html,
body {
  margin: 0;
  height: 974px;
  overflow: hidden;
}

body {
  display: flex;
  flex-direction: column;
  background: #fff;
  color: #1c1c1c;
  font-family: "Noto Sans", "Noto Sans CJK SC", sans-serif;
  font-size: 12px;
  line-height: 16px;
}

.sheet {
  position: absolute;
  width: 0;
  height: 0;
}

.ic {
  width: 16px;
  height: 16px;
  flex: none;
}

.ic13 {
  width: 13px;
  height: 13px;
  flex: none;
}

.caret {
  display: inline-block;
  width: 0;
  height: 0;
  margin-left: 6px;
  border-top: 4px solid #555;
  border-left: 3px solid transparent;
  border-right: 3px solid transparent;
}

/* title row */
.titlebar {
  display: flex;
  flex: none;
  height: 22px;
  align-items: center;
}

.qat {
  display: flex;
  width: 721px;
  align-items: center;
  gap: 7px;
  padding-left: 13px;
}

.qcaret {
  margin: 0 -2px 0 -3px;
}

.qcaret.light {
  border-top-color: #bbb;
}

.qmore {
  margin-left: 0;
  border-top-color: #666;
}

.sigma {
  width: 12px;
  margin-left: 4px;
  color: #2f78c4;
  font-size: 15px;
  font-weight: 700;
}

.apptitle {
  padding-top: 1px;
  letter-spacing: .25px;
  white-space: nowrap;
}

/* tabs */
.tabs {
  display: flex;
  flex: none;
  height: 19px;
  padding-left: 8px;
  border-bottom: 1px solid #d6d6d6;
}

.tab {
  padding: 2px 13px 0;
  color: #333;
}

.tab.active {
  height: 19px;
  background: #5fabf2;
  color: #fff;
  border-radius: 2px 2px 0 0;
}

.askbox {
  width: 110px;
  height: 17px;
  margin-left: auto;
  padding-left: 2px;
  border: 1px solid #ccc;
  border-right: 0;
  color: #c4c4c4;
  line-height: 15px;
  white-space: nowrap;
}

/* ribbon */
.ribbon {
  display: flex;
  flex: none;
  height: 98px;
  background: linear-gradient(#fff 0, #fff 62%, #e9ecee 100%);
  border-bottom: 1px solid #9a9a9a;
}

.group {
  flex: none;
  height: 94px;
  margin-top: 2px;
  border-right: 1px solid #d4d7da;
}

.group-body {
  display: flex;
  height: 69px;
  padding-top: 1px;
}

.group-label {
  height: 16px;
  margin-top: 6px;
  text-align: center;
  color: #333;
}

.group-label.left {
  padding-left: 12px;
  text-align: left;
}

.g-select {
  width: 104px;
}

.g-select .group-body {
  padding-left: 11px;
}

.g-cad {
  width: 194px;
}

.g-cad .group-body {
  padding-left: 9px;
}

.g-common {
  width: 275px;
}

.g-common .group-body {
  padding-left: 9px;
}

.g-modify {
  width: 238px;
}

.g-modify .group-body {
  padding-left: 10px;
}

.g-draw {
  width: 118px;
}

.g-draw .group-body {
  padding-left: 10px;
}

.g-haunch {
  width: 153px;
}

.g-haunch .group-body {
  height: 73px;
  padding-left: 7px;
  padding-top: 3px;
}

.g-haunch .group-label {
  margin-top: 4px;
  padding-left: 6px;
}

.rcol {
  flex: none;
}

.w54 {
  width: 54px;
}

.w66 {
  width: 66px;
}

.w79 {
  width: 79px;
}

.w111 {
  width: 111px;
}

.ritem {
  display: flex;
  height: 23px;
  align-items: center;
  gap: 3px;
  white-space: nowrap;
}

.ritem .caret {
  margin-left: 3px;
}

.ritem.off {
  color: #b8b8b8;
}

.ritem.off .caret {
  border-top-color: #c8c8c8;
}

.drawbtn {
  display: flex;
  flex-direction: column;
  width: 30px;
  margin-right: 13px;
  padding-top: 3px;
  align-items: center;
  color: #b8b8b8;
}

.drawbtn span {
  margin-top: 5px;
}

.ic30 {
  width: 30px;
  height: 30px;
}

.drawsmall {
  display: flex;
  flex-direction: column;
  gap: 7px;
  margin-left: -3px;
  padding-top: 3px;
}

.bigbtn {
  display: flex;
  flex-direction: column;
  width: 68px;
  height: 67px;
  align-items: center;
  padding-top: 3px;
}

.bigbtn.on {
  background: #c6d8ef;
}

.bigbtn.second {
  margin-left: 2px;
}

.ic34 {
  width: 34px;
  height: 30px;
}

.bigbtn span {
  margin-top: 4px;
  white-space: nowrap;
}

/* option bar */
.optbar {
  display: flex;
  flex: none;
  height: 27px;
  align-items: center;
  background: #c6c9cd;
  border-bottom: 1px solid #a4a7ab;
  line-height: 17px;
  white-space: nowrap;
}

.sel {
  position: relative;
  width: 98px;
  height: 21px;
  margin-right: 2px;
  padding-left: 3px;
  background: #fff;
  line-height: 22px;
}

.sel.first {
  width: 59px;
  padding-left: 1px;
}

.sel.small {
  width: 58px;
  margin: 0 1px 0 0;
}

.sel .caret {
  position: absolute;
  top: 9px;
  right: 5px;
  border-top-color: #666;
}

.radio {
  flex: none;
  width: 13px;
  height: 13px;
  margin-left: 2px;
  background: #fff;
  border: 1px solid #9a9a9a;
  border-radius: 50%;
}

.radio.checked {
  background: radial-gradient(circle, #3d8bf0 0, #3d8bf0 3.500px, #fff 4px);
}

.optlabel {
  margin-left: 6px;
  margin-right: 1px;
}

.optlabel + .radio {
  margin-left: 1px;
}

.optlabel + .radio.last {
  margin-left: 2px;
}

.optlabel.wide {
  margin-left: 7px;
  margin-right: 0;
}

.optgray {
  margin: 0 1px;
  color: #8f9296;
}

.spin {
  position: relative;
  width: 62px;
  height: 21px;
  padding-left: 3px;
  background: #fff;
  color: #a8a8a8;
  line-height: 22px;
}

.arrows {
  position: absolute;
  top: 4px;
  right: 5px;
  display: flex;
  flex-direction: column;
  gap: 3px;
}

.arrows i {
  width: 0;
  height: 0;
  border-left: 3px solid transparent;
  border-right: 3px solid transparent;
  border-bottom: 4px solid #444;
}

.arrows i + i {
  border-bottom: 0;
  border-top: 4px solid #444;
}

/* main work area */
.work {
  display: flex;
  flex: 1;
  min-height: 0;
}

.panelhead {
  position: relative;
  height: 12px;
  background: #d3d5d8;
}

.close {
  position: absolute;
  top: 0;
  right: 5px;
  color: #777;
  font-size: 12px;
  font-weight: 700;
  line-height: 12px;
}

.nav {
  position: relative;
  flex: none;
  width: 168px;
  margin-right: 4px;
  overflow: hidden;
  border-right: 1px solid #c8c8c8;
}

.navtitle {
  height: 21px;
  background: #eee;
  border-bottom: 1px solid #ccd0d6;
  color: #777;
  line-height: 20px;
}

.navtitle span {
  display: block;
  margin-left: -33px;
  white-space: nowrap;
}

.navtools {
  display: flex;
  height: 28px;
  justify-content: flex-end;
  gap: 4px;
  padding: 4px 2px 0 0;
  background: #eee;
}

.toolbtn {
  display: flex;
  width: 24px;
  height: 22px;
  align-items: center;
  justify-content: center;
  background: #fff;
  border: 1px solid #77b1ea;
  border-radius: 3px;
}

.navlist {
  padding-top: 4px;
}

.navrow,
.navgroup {
  display: flex;
  height: 24px;
  align-items: center;
  gap: 6px;
  padding-left: 2px;
  white-space: nowrap;
}

.navgroup.wide {
  margin-left: -20px;
}

.navgroup.stair {
  margin-left: -20px;
}

.navrow.picked {
  width: 109px;
  height: 22px;
  margin: 1px 0;
  background: #c6d8ef;
}

.navscroll {
  position: absolute;
  top: 228px;
  left: 156px;
  width: 8px;
  height: 534px;
  background: #c9c9c9;
  border-radius: 4px;
}

.midcol {
  display: flex;
  flex: none;
  flex-direction: column;
  width: 280px;
  gap: 5px;
}

.panel {
  border-left: 1px solid #c4c4c4;
  border-right: 1px solid #c4c4c4;
}

.list-panel {
  height: 475px;
  border-bottom: 1px solid #bbb;
}

.prop-panel {
  flex: 1;
  display: flex;
  flex-direction: column;
  min-height: 0;
}

.ptabs {
  display: flex;
  height: 22px;
  background: #eee;
  border-bottom: 1px solid #cfcfcf;
}

.ptab {
  width: 65px;
  padding-top: 4px;
  background: #ddd;
  border-right: 1px solid #c8c8c8;
  color: #888;
  font-weight: 700;
  text-align: center;
}

.ptab.active {
  background: #eee;
  color: #2a2a2a;
  height: 22px;
}

.ptools {
  display: flex;
  position: relative;
  height: 28px;
  align-items: center;
  padding: 3px 0 0 6px;
  background: #eee;
  border-bottom: 1px solid #cfcfcf;
}

.ptool {
  display: flex;
  align-items: center;
  gap: 3px;
  white-space: nowrap;
}

.t-new {
  width: 62px;
}

.t-new .caret {
  margin-left: 3px;
  border-top-color: #666;
}

.t-copy {
  width: 52px;
}

.t-del {
  width: 52px;
}

.more {
  position: absolute;
  right: 5px;
  top: 6px;
  color: #222;
  font-size: 10px;
  letter-spacing: -1px;
}

.psearch {
  display: flex;
  height: 20px;
  align-items: center;
  justify-content: space-between;
  padding: 2px 10px 0 2px;
  border-bottom: 1px solid #c4c4c4;
  color: #888;
}

.tree {
  padding-top: 4px;
}

.tree-root {
  display: flex;
  height: 21px;
  align-items: center;
  padding-left: 10px;
}

.tri {
  width: 0;
  height: 0;
  margin-right: 8px;
  border-bottom: 5px solid #333;
  border-left: 5px solid transparent;
}

.tree-leaf {
  height: 21px;
  margin-top: 3px;
  padding-left: 40px;
}

.tree-leaf span {
  display: inline-block;
  width: 39px;
  height: 21px;
  background: #b4cdec;
  line-height: 21px;
  text-align: center;
}

.propwrap {
  flex: 1;
  background: linear-gradient(90deg, #eee 22px, #fff 22px);
}

.props {
  width: 278px;
  table-layout: fixed;
  border-collapse: collapse;
  background: #fff;
}

.c-no {
  width: 22px;
}

.c-name {
  width: 100px;
}

.c-val {
  width: 113px;
}

.c-add {
  width: 43px;
}

.props th,
.props td {
  height: 21px;
  padding: 2px 3px 0;
  border: 1px solid #dcdcdc;
  font-weight: 400;
  white-space: nowrap;
  line-height: 16px;
  overflow: hidden;
}

.props th {
  background: #eee;
  color: #333;
  text-align: center;
}

.props td.no {
  padding: 2px 0 0;
  background: #eee;
  color: #444;
  text-align: center;
}

.link {
  color: #2a6fe0;
}

.bar {
  position: relative;
  top: -2px;
  margin: 0 1px 0 2px;
  font-size: 10px;
}

.props td.chk {
  padding: 0 5px 0 3px;
  text-align: center;
}

.chk i {
  display: block;
  width: 14px;
  height: 14px;
  margin: 0 auto;
  border: 1px solid #888;
  border-radius: 2px;
}

.plus i {
  display: inline-block;
  width: 12px;
  height: 12px;
  margin: 0 7px 0 0;
  border: 1px solid #888;
  border-radius: 2px;
  font-style: normal;
  line-height: 10px;
  text-align: center;
  vertical-align: -1px;
}

.shade {
  background: #e8e8e8;
}

.splitter {
  display: flex;
  flex: none;
  width: 4px;
  padding-top: 373px;
}

.splitter i {
  display: block;
  width: 4px;
  height: 101px;
  background: #7d8590;
}

.canvas {
  position: relative;
  flex: 1;
  min-width: 0;
  overflow: hidden;
}

.drawing {
  display: block;
}

.crisp {
  shape-rendering: crispEdges;
}

.cad {
  fill: #5f1fc0;
  font-family: Roboto, "Noto Sans", sans-serif;
  font-size: 87px;
  font-weight: 100;
}

.cad.hk {
  fill: #7b569b;
  font-size: 110px;
}

.axis {
  font-family: "Liberation Sans", sans-serif;
  font-size: 15px;
  text-anchor: middle;
}

.axis.y {
  fill: #00e000;
}

.axis.x {
  fill: #f01010;
}

.viewbar {
  position: absolute;
  top: 0;
  right: 0;
  width: 14px;
  height: 228px;
  background: #9ea2a8;
  border-left: 1px solid #eee;
}

.viewbar svg {
  display: block;
}
```
